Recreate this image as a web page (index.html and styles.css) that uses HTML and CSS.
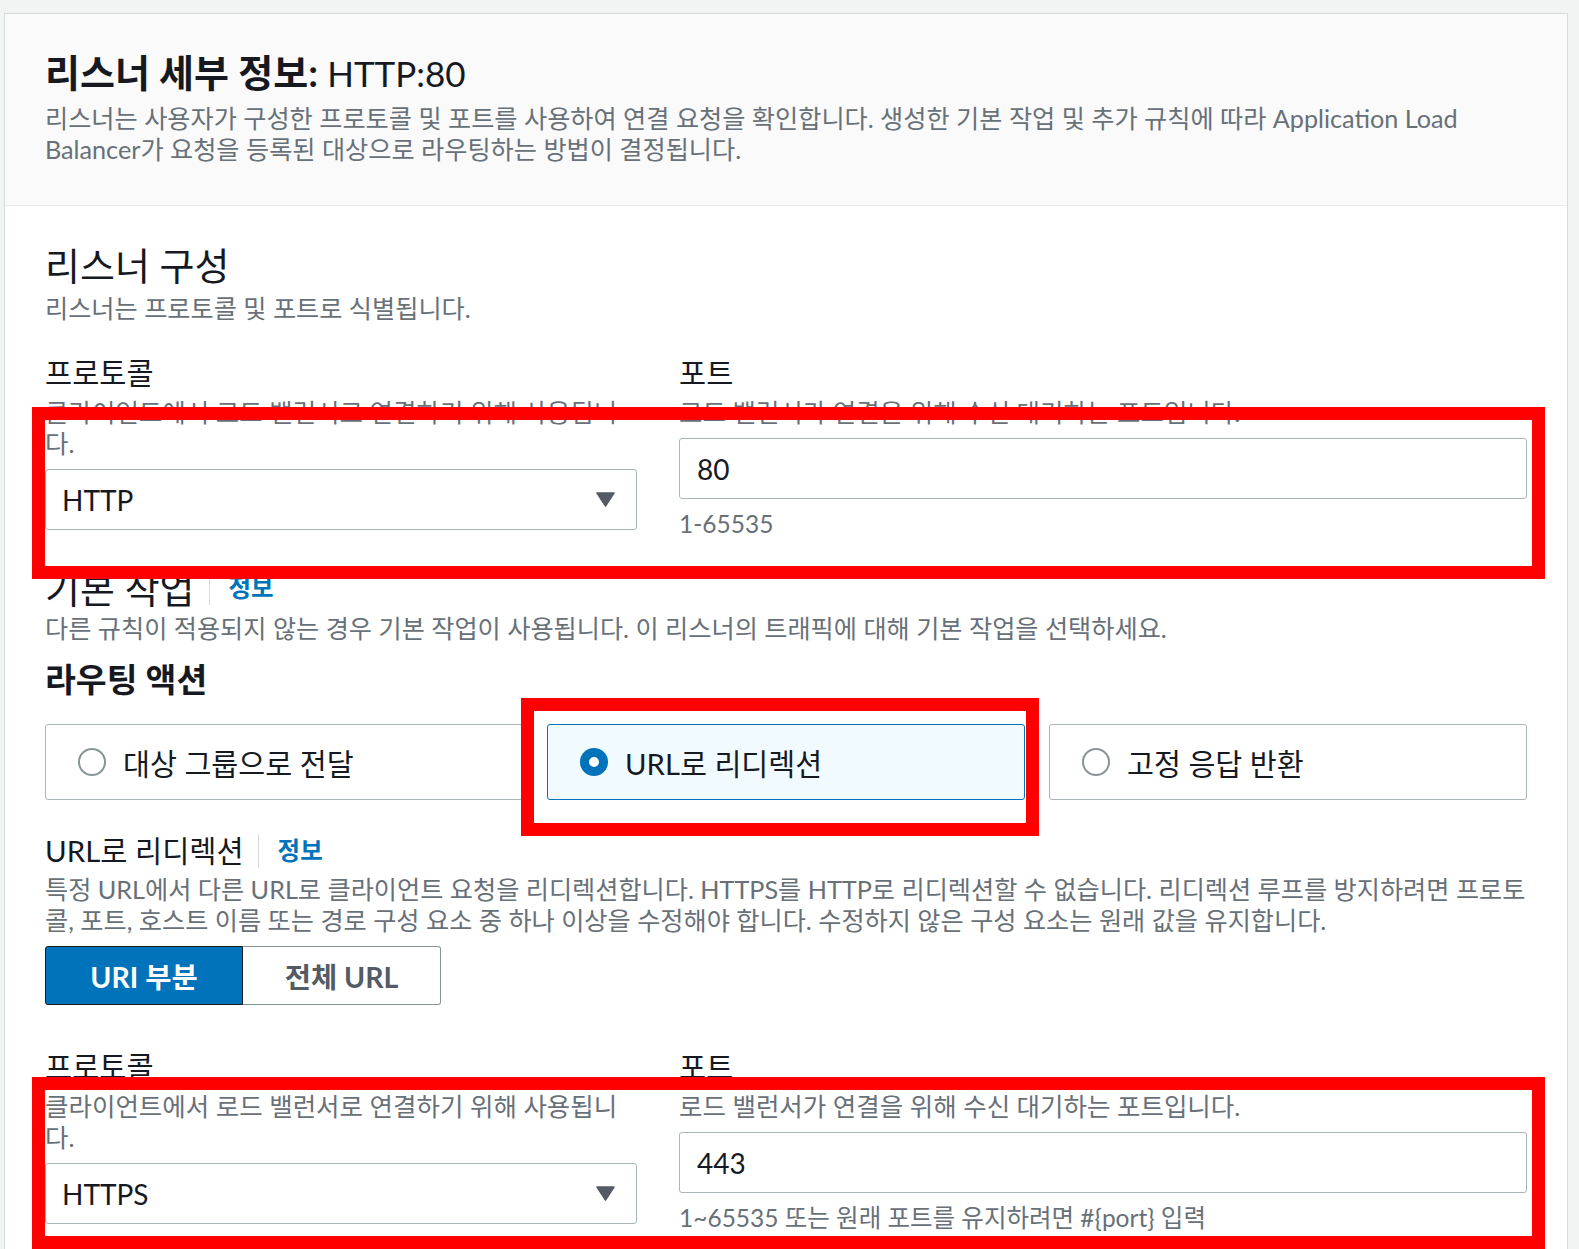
FILE: index.html
```html
<!DOCTYPE html>
<html lang="ko">
<head>
    <meta charset="UTF-8">
    <meta name="viewport" content="width=device-width, initial-scale=1.0">
    <title>리스너 세부 정보: HTTP:80</title>
    <link rel="stylesheet" href="styles.css">
</head>
<body>
    <div class="panel">
        <div class="panel-header">
            <h1>리스너 세부 정보: <span class="title-value">HTTP:80</span></h1>
            <p class="desc">리스너는 사용자가 구성한 프로토콜 및 포트를 사용하여 연결 요청을 확인합니다. 생성한 기본 작업 및 추가 규칙에 따라 Application Load Balancer가 요청을 등록된 대상으로 라우팅하는 방법이 결정됩니다.</p>
        </div>

        <div class="panel-body">
            <h2>리스너 구성</h2>
            <p class="desc section-desc">리스너는 프로토콜 및 포트로 식별됩니다.</p>

            <div class="field-row">
                <div class="field">
                    <div class="label">프로토콜</div>
                    <div class="help">클라이언트에서 로드 밸런서로 연결하기 위해 사용됩니다.</div>
                    <div class="select">
                        <span>HTTP</span>
                        <svg class="caret" width="19" height="15" viewBox="0 0 19 15"><polygon points="1,1 18,1 9.5,14" fill="#545b64" stroke="#545b64" stroke-width="1.5" stroke-linejoin="round"/></svg>
                    </div>
                </div>
                <div class="field">
                    <div class="label">포트</div>
                    <div class="help">로드 밸런서가 연결을 위해 수신 대기하는 포트입니다.</div>
                    <div class="input">80</div>
                    <div class="hint">1-65535</div>
                </div>
            </div>

            <h2 class="with-info">기본 작업 <a class="info" href="#">정보</a></h2>
            <p class="desc action-desc">다른 규칙이 적용되지 않는 경우 기본 작업이 사용됩니다. 이 리스너의 트래픽에 대해 기본 작업을 선택하세요.</p>

            <h3>라우팅 액션</h3>
            <div class="tiles">
                <div class="tile">
                    <span class="radio"></span>
                    <span>대상 그룹으로 전달</span>
                </div>
                <div class="tile selected">
                    <span class="radio"></span>
                    <span>URL로 리디렉션</span>
                </div>
                <div class="tile">
                    <span class="radio"></span>
                    <span>고정 응답 반환</span>
                </div>
            </div>

            <div class="label with-info redirect-label">URL로 리디렉션 <a class="info" href="#">정보</a></div>
            <p class="desc redirect-desc">특정 URL에서 다른 URL로 클라이언트 요청을 리디렉션합니다. HTTPS를 HTTP로 리디렉션할 수 없습니다. 리디렉션 루프를 방지하려면 프로토콜, 포트, 호스트 이름 또는 경로 구성 요소 중 하나 이상을 수정해야 합니다. 수정하지 않은 구성 요소는 원래 값을 유지합니다.</p>

            <div class="segmented">
                <button class="segment active">URI 부분</button>
                <button class="segment">전체 URL</button>
            </div>

            <div class="field-row second">
                <div class="field">
                    <div class="label">프로토콜</div>
                    <div class="help">클라이언트에서 로드 밸런서로 연결하기 위해 사용됩니다.</div>
                    <div class="select">
                        <span>HTTPS</span>
                        <svg class="caret" width="19" height="15" viewBox="0 0 19 15"><polygon points="1,1 18,1 9.5,14" fill="#545b64" stroke="#545b64" stroke-width="1.5" stroke-linejoin="round"/></svg>
                    </div>
                </div>
                <div class="field">
                    <div class="label">포트</div>
                    <div class="help">로드 밸런서가 연결을 위해 수신 대기하는 포트입니다.</div>
                    <div class="input">443</div>
                    <div class="hint">1~65535 또는 원래 포트를 유지하려면 #{port} 입력</div>
                </div>
            </div>
        </div>
    </div>

    <!-- 강조 표시 -->
    <div class="mark mark-listener"></div>
    <div class="mark mark-action"></div>
    <div class="mark mark-target"></div>
</body>
</html>
```

FILE: styles.css
```css
:root {
    --text: #16191f;
    --muted: #687078;
    --border: #aab7b8;
    --blue: #0073bb;
    --mark: #ff0000;
}

body {
    margin: 0;
    background: #f2f3f3;
    font-family: Lato, "Noto Sans CJK KR", sans-serif;
    color: var(--text);
}

.panel {
    margin: 13px 11px 0 4px;
    background: #fff;
    border: 1px solid #d5dbdb;
}

.panel-header {
    background: #fafafa;
    border-bottom: 1px solid #eaeded;
    padding: 36px 40px 40px;
}

h1 {
    margin: 0;
    font-size: 38px;
    line-height: 44px;
    font-weight: 700;
}

.title-value {
    font-size: 35px;
    font-weight: 400;
}

.desc {
    margin: 0;
    font-size: 25.2px;
    line-height: 31px;
    color: var(--muted);
}

.panel-header .desc {
    margin-top: 8px;
}

.panel-body {
    padding: 37px 40px 40px;
}

h2 {
    margin: 0;
    font-size: 38px;
    line-height: 44px;
    font-weight: 400;
}

.section-desc {
    margin-top: 6px;
}

.action-desc {
    margin-top: 3px;
}

.field-row {
    display: grid;
    grid-template-columns: 592px 1fr;
    gap: 42px;
    margin-top: 31px;
}

.field-row.second {
    margin-top: 44px;
}

.label {
    font-size: 29.5px;
    line-height: 36px;
}

.help {
    margin-top: 6px;
    font-size: 25.5px;
    line-height: 31px;
    color: var(--muted);
}

.select,
.input {
    margin-top: 10px;
    height: 61px;
    box-sizing: border-box;
    border: 1px solid var(--border);
    border-radius: 3px;
    display: flex;
    align-items: center;
    font-size: 28px;
}

.select {
    justify-content: space-between;
    padding: 0 21px 0 16px;
}

.input {
    padding: 0 17px;
}

.hint {
    margin-top: 9px;
    font-size: 24.5px;
    line-height: 31px;
    color: var(--muted);
}

.with-info {
    display: flex;
    align-items: center;
}

.info {
    margin-left: 14px;
    padding-left: 19px;
    border-left: 1px solid #d5dbdb;
    line-height: 34px;
    font-size: 24.5px;
    font-weight: 700;
    color: var(--blue);
    text-decoration: none;
}

h2.with-info {
    margin-top: 27px;
}

h3 {
    margin: 15px 0 0;
    font-size: 33.5px;
    line-height: 40px;
    font-weight: 700;
}

.tiles {
    display: grid;
    grid-template-columns: repeat(3, 1fr);
    gap: 24px;
    margin-top: 25px;
}

.tile {
    height: 76px;
    box-sizing: border-box;
    border: 1px solid var(--border);
    border-radius: 3px;
    display: flex;
    align-items: center;
    gap: 17px;
    padding-left: 32px;
    font-size: 29.3px;
}

.tile.selected {
    background: #f1faff;
    border-color: var(--blue);
}

.radio {
    width: 28px;
    height: 28px;
    box-sizing: border-box;
    border: 2px solid #879596;
    border-radius: 50%;
    background: #fff;
}

.tile.selected .radio {
    border: 9px solid var(--blue);
}

.redirect-label {
    margin-top: 33px;
}

.redirect-desc {
    margin-top: 5px;
}

.segmented {
    display: flex;
    margin-top: 10px;
}

.segment {
    width: 198px;
    height: 59px;
    border: 1px solid #879596;
    background: #fff;
    font-family: inherit;
    font-size: 28.5px;
    font-weight: 700;
    color: #545b64;
    padding: 0;
}

.segment.active {
    background: var(--blue);
    border-color: #16191f;
    color: #fff;
    border-radius: 3px 0 0 3px;
}

.segment:last-child {
    border-left: none;
    border-radius: 0 3px 3px 0;
}

.mark {
    position: absolute;
    box-sizing: border-box;
    border: 13px solid var(--mark);
}

.mark-listener {
    left: 32px;
    top: 407px;
    width: 1513px;
    height: 172px;
}

.mark-action {
    left: 521px;
    top: 698px;
    width: 518px;
    height: 138px;
}

.mark-target {
    left: 32px;
    top: 1077px;
    width: 1513px;
    height: 172px;
}
```
